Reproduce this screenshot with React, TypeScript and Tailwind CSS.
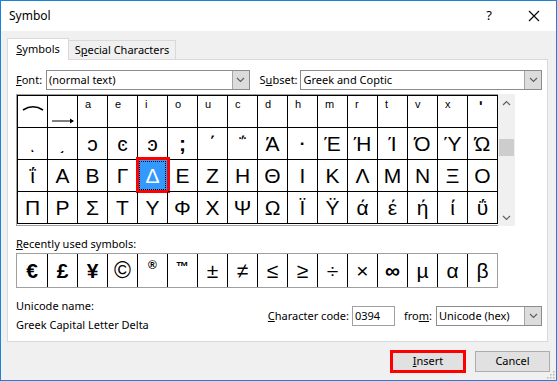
import React from "react";

type Glyph = { t: React.ReactNode; cls?: string };

const combining = ["a", "e", "i", "o", "u", "c", "d", "h", "m", "r", "t", "v", "x"];

const row1: Glyph[] = [
  {
    t: (
      <svg width="22" height="6" viewBox="0 0 22 6">
        <path d="M1 5 Q11 -1.5 21 5" fill="none" stroke="#000" strokeWidth="1.6" />
      </svg>
    ),
    cls: "items-start justify-center pt-[9px]",
  },
  {
    t: (
      <svg width="24" height="6" viewBox="0 0 24 6">
        <path d="M1 3 H22" stroke="#000" strokeWidth="1" />
        <path d="M19 0.5 L23 3 L19 5.5 Z" fill="#000" />
      </svg>
    ),
    cls: "items-end justify-center pb-[3px]",
  },
  ...combining.map((c) => ({ t: c, cls: "items-start justify-start pl-[7px] pt-[3px] text-[11px]" })),
  { t: "ʹ", cls: "items-start justify-start pl-[11px] pt-[3px] text-[15px] font-bold" },
];

const row2: Glyph[] = [
  { t: "ͺ", cls: "items-end justify-center pb-[8px] text-[15px] font-bold" },
  { t: "͵", cls: "items-end justify-center pb-[7px] text-[15px] font-bold" },
  { t: "ͻ" },
  { t: "ͼ" },
  { t: "ͽ" },
  { t: ";", cls: "font-bold" },
  { t: "΄" },
  { t: "΅" },
  { t: "Ά" },
  { t: "·", cls: "text-[17px] font-bold" },
  { t: "Έ" },
  { t: "Ή" },
  { t: "Ί" },
  { t: "Ό" },
  { t: "Ύ" },
  { t: "Ώ" },
];

const row3 = "ΐΑΒΓΔΕΖΗΘΙΚΛΜΝΞΟ".split("").map((t) => ({ t }));
const row4 = "ΠΡΣΤΥΦΧΨΩΪΫάέήίΰ".split("").map((t) => ({ t }));

const recent: Glyph[] = [
  { t: "€", cls: "font-bold" },
  { t: "£", cls: "font-bold" },
  { t: "¥", cls: "font-bold" },
  { t: "©", cls: "text-[23px]" },
  { t: "®", cls: "text-[12px] items-start pt-[5px] font-bold" },
  { t: "™", cls: "text-[13px] items-start pt-[6px] font-bold" },
  { t: "±" },
  { t: "≠" },
  { t: "≤" },
  { t: "≥" },
  { t: "÷" },
  { t: "×" },
  { t: "∞", cls: "font-bold" },
  { t: "µ" },
  { t: "α" },
  { t: "β" },
];

// keep centering unless a glyph sets its own alignment
const align = (cls?: string) =>
  `${cls?.includes("items-") ? "" : "items-center"} ${cls?.includes("justify-") ? "" : "justify-center"} ${cls ?? ""}`;

function Chevron({ up = false }: { up?: boolean }) {
  return (
    <svg width="9" height="6" viewBox="0 0 9 6">
      <path d={up ? "M1 5 L4.5 1.5 L8 5" : "M1 1 L4.5 4.5 L8 1"} fill="none" stroke="#606060" strokeWidth="1.2" />
    </svg>
  );
}

function Dropdown({ w, text }: { w: string; text: string }) {
  return (
    <div className={`${w} h-[20px] border border-[#8c8c8c] bg-white flex items-stretch`}>
      <span className="flex-1 pl-[2px] flex items-center text-[#000] whitespace-nowrap">{text}</span>
      <span className="w-[17px] bg-[#dcdcdc] border-l border-[#a6a6a6] flex items-center justify-center">
        <Chevron />
      </span>
    </div>
  );
}

export default function App() {
  const rows = [row1, row2, row3, row4];

  return (
    <div className="w-[557px] h-[381px] border border-[#1883d7] bg-[#f0f0f0] flex flex-col relative text-[11px] text-black font-['Noto_Sans','Open_Sans',sans-serif]">
      {/* title bar */}
      <div className="h-[30px] bg-white flex items-center pl-[8px]">
        <span className="text-[12px]">Symbol</span>
        <span className="ml-auto text-[13px] mr-[36px]">?</span>
        <svg width="12" height="12" viewBox="0 0 12 12" className="mr-[16px]">
          <path d="M1 1 L11 11 M11 1 L1 11" stroke="#000" strokeWidth="1.1" />
        </svg>
      </div>

      <div className="flex flex-col px-[6px]">
        {/* tabs */}
        <div className="flex items-end mt-[7px] -mb-px relative z-10 h-[22px]">
          <div className="w-[62px] h-[22px] bg-white border border-b-0 border-[#d9d9d9] flex items-center justify-center">
            <span><u>S</u>ymbols</span>
          </div>
          <div className="w-[108px] h-[19px] mb-px -ml-px bg-[#f0f0f0] border border-b-0 border-[#d9d9d9] flex items-center justify-center">
            <span>S<u>p</u>ecial Characters</span>
          </div>
        </div>

        {/* panel */}
        <div className="w-[541px] h-[283px] bg-white border border-[#d9d9d9] pl-[8px] pr-[5px] flex flex-col">
          <div className="flex items-center h-[20px] mt-[10px]">
            <span className="w-[30px]"><u>F</u>ont:</span>
            <Dropdown w="w-[204px]" text="(normal text)" />
            <span className="ml-[10px] w-[41px]">S<u>u</u>bset:</span>
            <Dropdown w="w-[242px]" text="Greek and Coptic" />
          </div>

          {/* symbol grid */}
          <div className="flex h-[132px] mt-[4px]">
            <div className="border border-r-0 border-[#a0a0a0] h-[132px]">
              <div className="grid grid-cols-[repeat(16,30px)] border-l border-t border-black font-['Liberation_Sans','DejaVu_Sans',sans-serif] text-[21px] leading-none">
                {rows.map((row, ri) =>
                  row.map((g, ci) => {
                    const sel = ri === 2 && ci === 4;
                    return (
                      <div
                        key={`${ri}-${ci}`}
                        className={`relative h-[32px] border-r border-b border-black flex ${align(g.cls)} ${
                          sel ? "bg-[#3399ff] text-white" : ""
                        }`}
                      >
                        {g.t}
                        {sel && (
                          <>
                            <div className="absolute inset-[1px] border border-dotted border-black" />
                            <div className="absolute left-[-2px] top-[-3px] right-[-3px] bottom-[-2px] border-[3px] border-[#f00]" />
                          </>
                        )}
                      </div>
                    );
                  })
                )}
              </div>
            </div>
            <div className="w-[17px] h-[132px] bg-[#f0f0f0] flex flex-col">
              <div className="h-[17px] flex items-center justify-center">
                <Chevron up />
              </div>
              <div className="h-[17px] mt-[28px] mx-[1px] bg-[#cdcdcd]" />
              <div className="flex-1" />
              <div className="h-[17px] flex items-center justify-center">
                <Chevron />
              </div>
            </div>
          </div>

          <div className="mt-[10px] h-[16px] leading-[16px]">
            <u>R</u>ecently used symbols:
          </div>

          <div className="mt-[1px] w-[482px] border border-[#a0a0a0] flex font-['Liberation_Sans','DejaVu_Sans',sans-serif] text-[21px] leading-none">
            {recent.map((g, i) => (
              <div key={i} className={`w-[30px] h-[33px] flex ${i > 0 ? "border-l border-black" : ""} ${align(g.cls)}`}>
                {g.t}
              </div>
            ))}
          </div>

          <div className="flex mt-[8px]">
            <div className="flex flex-col">
              <span className="leading-[19px]">Unicode name:</span>
              <span className="leading-[19px]">Greek Capital Letter Delta</span>
            </div>
            <div className="ml-auto mt-[10px] flex items-center h-[20px]">
              <span>
                <u>C</u>haracter code:
              </span>
              <div className="ml-[3px] w-[43px] h-[20px] border border-[#a0a0a0] flex items-center pl-[2px]">0394</div>
              <span className="ml-[9px] mr-[4px]">
                fro<u>m</u>:
              </span>
              <Dropdown w="w-[106px]" text="Unicode (hex)" />
            </div>
          </div>
        </div>

        {/* buttons */}
        <div className="flex justify-end items-center mt-[8px] h-[23px]">
          <div className="w-[76px] h-[23px] border-[3px] border-[#f00] bg-[#e1e1e1] flex items-center justify-center">
            <span>
              <u>I</u>nsert
            </span>
          </div>
          <div className="ml-[9px] w-[75px] h-[21px] border border-[#adadad] bg-[#e1e1e1] flex items-center justify-center">
            Cancel
          </div>
        </div>
      </div>

      {/* resize grip */}
      <svg width="10" height="10" viewBox="0 0 10 10" className="absolute right-[1px] bottom-[1px]">
        {[
          [8, 2],
          [5, 5],
          [8, 5],
          [2, 8],
          [5, 8],
          [8, 8],
        ].map(([x, y], i) => (
          <rect key={i} x={x} y={y} width="1.5" height="1.5" fill="#b8b8b8" />
        ))}
      </svg>
    </div>
  );
}
